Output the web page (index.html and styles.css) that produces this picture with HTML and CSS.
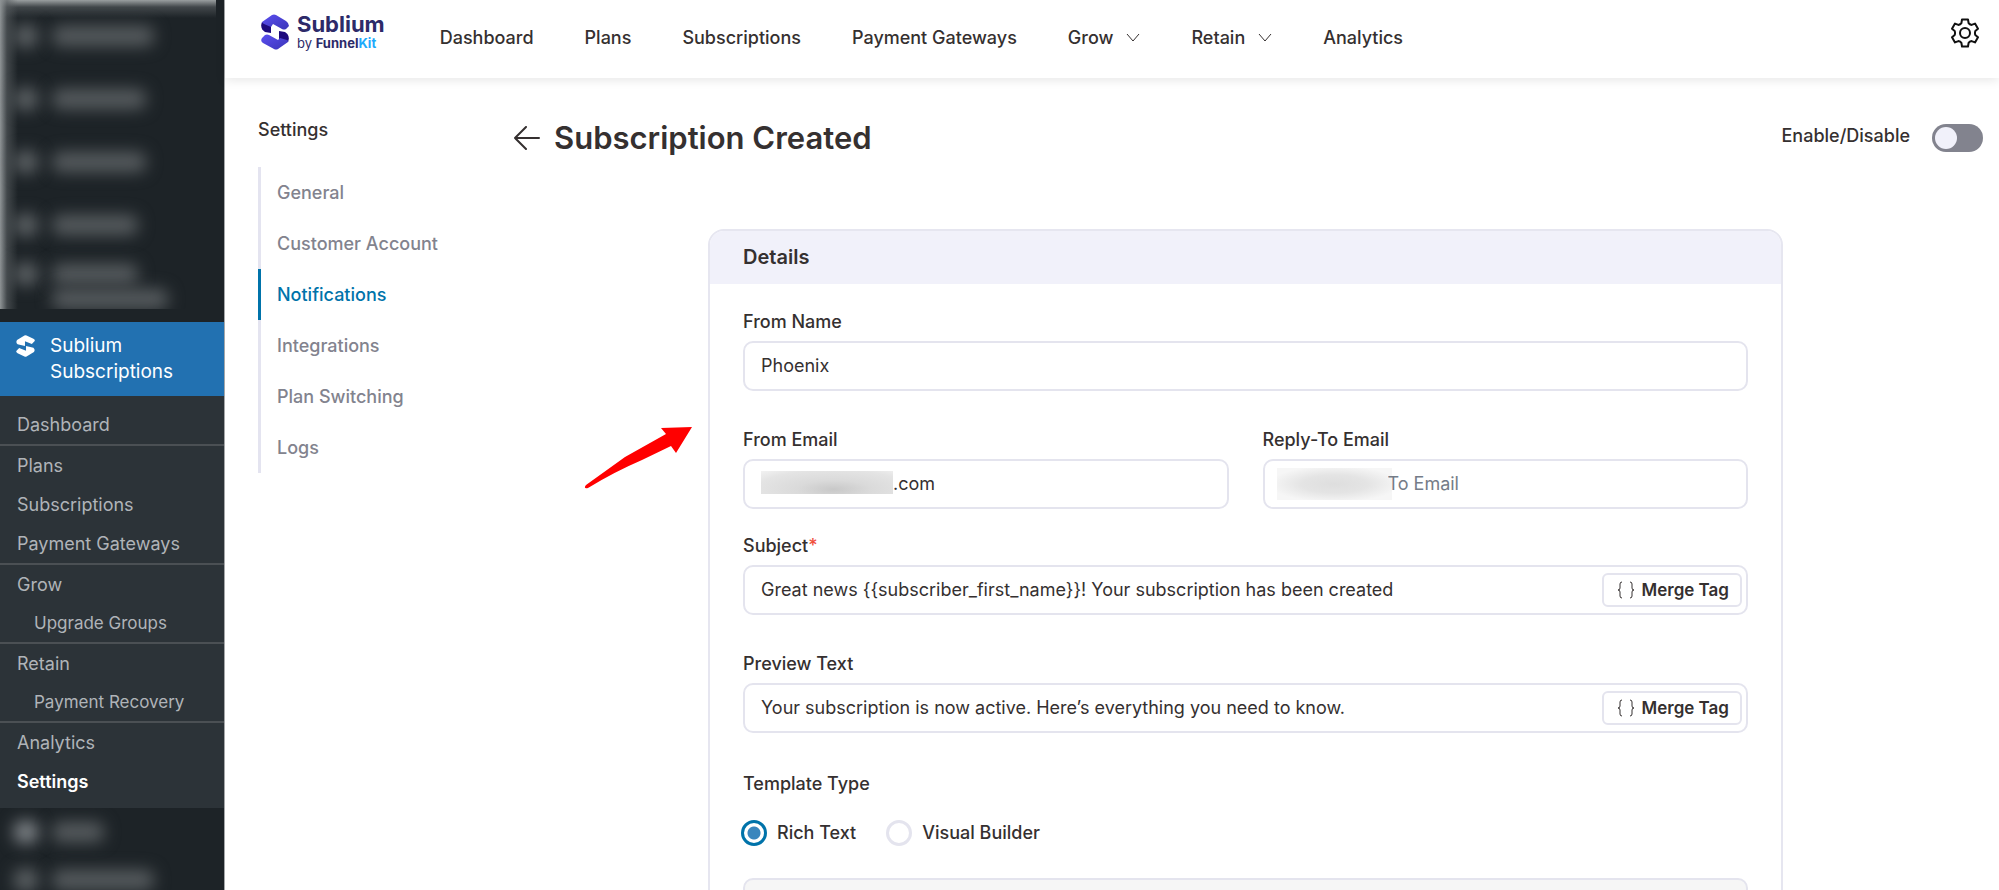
FILE: index.html
```html
<!DOCTYPE html>
<html lang="en">
<head>
    <meta charset="UTF-8">
    <meta name="viewport" content="width=device-width, initial-scale=1.0">
    <title>Subscription Created - Sublium Subscriptions</title>
    <link rel="stylesheet" href="styles.css">
</head>
<body>

    <!-- WordPress admin menu -->
    <aside class="admin-menu">
        <div class="blurred blurred-top" aria-hidden="true">
            <div class="blur-row"><i class="blur-icon"></i><i class="blur-text"></i></div>
            <div class="blur-row"><i class="blur-icon"></i><i class="blur-text medium"></i></div>
            <div class="blur-row"><i class="blur-icon"></i><i class="blur-text medium"></i></div>
            <div class="blur-row"><i class="blur-icon"></i><i class="blur-text small"></i></div>
            <div class="blur-row double"><i class="blur-icon"></i><i class="blur-text small"></i><i class="blur-text second"></i></div>
        </div>

        <a class="menu-current" href="#">
            <svg class="menu-icon" viewBox="0 0 36 52" preserveAspectRatio="none" aria-hidden="true">
                <path fill="#fff" d="M2 12 16 1q2-1 4 0l13 8q4 3 2 6l-5 6-13-6v11L3 22q-4-5-1-10z"/>
                <path fill="#fff" d="M34 40 20 51q-2 1-4 0L3 43q-4-3-2-6l5-6 13 6V26l14 4q4 5 1 10z"/>
            </svg>
            <span>Sublium Subscriptions</span>
        </a>

        <ul class="submenu">
            <li class="divided"><a href="#">Dashboard</a></li>
            <li><a href="#">Plans</a></li>
            <li><a href="#">Subscriptions</a></li>
            <li class="divided"><a href="#">Payment Gateways</a></li>
            <li><a href="#">Grow</a></li>
            <li class="child divided"><a href="#">Upgrade Groups</a></li>
            <li><a href="#">Retain</a></li>
            <li class="child divided"><a href="#">Payment Recovery</a></li>
            <li><a href="#">Analytics</a></li>
            <li class="active"><a href="#">Settings</a></li>
        </ul>

        <div class="blurred blurred-bottom" aria-hidden="true">
            <div class="blur-row"><i class="blur-icon bright"></i><i class="blur-text short"></i></div>
            <div class="blur-row"><i class="blur-icon"></i><i class="blur-text"></i></div>
        </div>
    </aside>

    <div class="page">
        <header class="topbar">
            <a class="logo" href="#">
                <svg class="logo-mark" viewBox="0 0 28 36" aria-hidden="true">
                    <defs>
                        <linearGradient id="light" x1="0" y1="0" x2="1" y2="1">
                            <stop offset="0" stop-color="#5b4ff0"/>
                            <stop offset="1" stop-color="#3b35b8"/>
                        </linearGradient>
                    </defs>
                    <path fill="#1d0a7d" d="M1 8c-2 5 0 8 3 10l6 1V11z"/>
                    <path fill="url(#light)" d="M1 8 11 1q2-1 4 0l10 6q3 2 3 5l-3 3q-2 1-4 0l-9-5-2 3-7-3q-2-1-2-2z"/>
                    <path fill="#1d0a7d" d="M27 28c2-5 0-8-3-10l-6-1v9z"/>
                    <path fill="url(#light)" d="M27 28 17 35q-2 1-4 0L2 29q-3-2-1-5l3-3q2-1 4 0l9 5 2-2 7 2q2 1 1 2z"/>
                </svg>
                <span class="logo-words">
                    <span class="logo-name">Sublium</span>
                    <span class="logo-by">by <b>Funnel</b><b class="kit">Kit</b></span>
                </span>
            </a>
            <nav class="main-nav">
                <a href="#">Dashboard</a>
                <a href="#">Plans</a>
                <a href="#">Subscriptions</a>
                <a href="#">Payment Gateways</a>
                <a href="#">Grow
                    <svg class="chevron" viewBox="0 0 14 9" aria-hidden="true"><path d="M1 1l6 7 6-7"/></svg>
                </a>
                <a href="#">Retain
                    <svg class="chevron" viewBox="0 0 14 9" aria-hidden="true"><path d="M1 1l6 7 6-7"/></svg>
                </a>
                <a href="#">Analytics</a>
            </nav>
            <button class="gear" type="button" aria-label="Settings">
                <svg viewBox="0 0 28 30" aria-hidden="true">
                    <path d="M11 1.500h6l.6 3.700q1 1.400 3 1.700l3.400-1.300 3 5.200-2.700 2.200q-.7 2 0 4l2.700 2.200-3 5.200-3.400-1.300q-2 .3-3 1.700l-.6 3.700h-6l-.6-3.700q-1-1.400-3-1.700l-3.400 1.300-3-5.200 2.700-2.200q.7-2 0-4l-2.700-2.200 3-5.200 3.400 1.300q2-.3 3-1.700z"/>
                    <circle cx="14" cy="15" r="5"/>
                </svg>
            </button>
        </header>

        <div class="content">
            <aside class="settings-nav">
                <h2>Settings</h2>
                <ul>
                    <li><a href="#">General</a></li>
                    <li><a href="#">Customer Account</a></li>
                    <li class="active"><a href="#">Notifications</a></li>
                    <li><a href="#">Integrations</a></li>
                    <li><a href="#">Plan Switching</a></li>
                    <li><a href="#">Logs</a></li>
                </ul>
            </aside>

            <main class="editor">
                <div class="editor-head">
                    <a class="back" href="#" aria-label="Back">
                        <svg viewBox="0 0 26 24" aria-hidden="true"><path d="M25 12H1M12 1 1 12l11 11"/></svg>
                    </a>
                    <h1>Subscription Created</h1>
                    <label class="enable" for="enabled">Enable/Disable</label>
                    <input class="toggle" type="checkbox" role="switch" id="enabled">
                </div>

                <form class="card">
                    <h2 class="card-title">Details</h2>
                    <div class="card-body">
                        <div class="field">
                            <label for="fromName">From Name</label>
                            <div class="box"><input type="text" id="fromName" value="Phoenix"></div>
                        </div>

                        <div class="field-row">
                            <div class="field">
                                <label for="fromEmail">From Email</label>
                                <div class="box">
                                    <i class="redacted"></i>
                                    <input type="text" id="fromEmail" value=".com">
                                </div>
                            </div>
                            <div class="field">
                                <label for="replyTo">Reply-To Email</label>
                                <div class="box">
                                    <i class="redacted tall"></i>
                                    <input type="text" id="replyTo" placeholder="To Email">
                                </div>
                            </div>
                        </div>

                        <div class="field">
                            <label for="subject">Subject<span class="required">*</span></label>
                            <div class="box">
                                <input type="text" id="subject" value="Great news {{subscriber_first_name}}! Your subscription has been created">
                                <button class="merge-tag" type="button">
                                    <svg viewBox="0 0 18 18" aria-hidden="true"><path d="M5 1Q3 1 3 3v4q0 2-2 2 2 0 2 2v4q0 2 2 2M13 1q2 0 2 2v4q0 2 2 2-2 0-2 2v4q0 2-2 2"/></svg>
                                    Merge Tag
                                </button>
                            </div>
                        </div>

                        <div class="field">
                            <label for="preview">Preview Text</label>
                            <div class="box">
                                <input type="text" id="preview" value="Your subscription is now active. Here’s everything you need to know.">
                                <button class="merge-tag" type="button">
                                    <svg viewBox="0 0 18 18" aria-hidden="true"><path d="M5 1Q3 1 3 3v4q0 2-2 2 2 0 2 2v4q0 2 2 2M13 1q2 0 2 2v4q0 2 2 2-2 0-2 2v4q0 2-2 2"/></svg>
                                    Merge Tag
                                </button>
                            </div>
                        </div>

                        <fieldset class="template-type">
                            <legend>Template Type</legend>
                            <div class="radios">
                                <label><input type="radio" name="template" checked>Rich Text</label>
                                <label><input type="radio" name="template">Visual Builder</label>
                            </div>
                        </fieldset>

                        <div class="rich-editor"></div>
                    </div>
                </form>

                <!-- Pointer to the details form -->
                <svg class="pointer" viewBox="0 0 110 64" aria-hidden="true">
                    <path fill="#f00" d="M108 1 77 2l5 6-41 23L2 59q-3 4 2 3Q30 46 58 34l29-14 5 7z"/>
                </svg>
            </main>
        </div>
    </div>

</body>
</html>
```

FILE: styles.css
```css
* {
    box-sizing: border-box;
}
body {
    font-family: Inter, "Liberation Sans", sans-serif;
    font-size: 18px;
    line-height: 22px;
    margin: 0;
    color: #353030;
    background: #fff;
    display: flex;
    height: 100vh;
    overflow: hidden;
}
a {
    color: inherit;
    text-decoration: none;
}
ul {
    list-style: none;
    margin: 0;
    padding: 0;
}
h1, h2 {
    margin: 0;
    font-weight: 500;
}
button, input {
    font: inherit;
    color: inherit;
}
svg {
    flex: none;
}

/* Admin menu */
.admin-menu {
    width: 225px;
    flex: none;
    background: #1d2327;
    border-right: 1px solid #a5a7a9;
    color: #f0f0f1;
    overflow: hidden;
}
.blurred {
    overflow: hidden;
}
.blurred-top {
    height: 309px;
    margin: 0 8px 13px 0;
    padding-top: 24px;
    background:
        linear-gradient(to right, #8f9496, rgba(90, 95, 98, 0.6) 7px, transparent 18px),
        linear-gradient(#9a9fa0, rgba(90, 95, 98, 0.6) 7px, transparent 18px);
}
.blurred-bottom {
    padding: 12px 4px;
}
.blur-row {
    display: grid;
    grid-template-columns: 24px 1fr;
    column-gap: 14px;
    align-items: center;
    height: 24px;
    margin: 0 0 39px 14px;
}
.blur-row.double {
    height: 50px;
    margin-top: -15px;
}
.blurred-bottom .blur-row {
    margin: 0 0 24px 10px;
}
.blur-icon {
    width: 24px;
    height: 22px;
    border-radius: 8px;
    background: #5d6265;
    filter: blur(8px);
}
.blur-icon.bright {
    background: #81868a;
}
.blur-text {
    width: 102px;
    height: 20px;
    border-radius: 8px;
    background: #575c5f;
    filter: blur(8px);
}
.blur-text.medium {
    width: 94px;
}
.blur-text.small {
    width: 86px;
}
.blur-text.short {
    width: 52px;
}
.blur-text.second {
    grid-column: 2;
    width: 116px;
}
.menu-current {
    display: flex;
    gap: 15px;
    padding: 11px 16px;
    background: #2271b1;
    color: #fff;
    font-size: 19px;
    line-height: 26px;
}
.menu-icon {
    width: 19px;
    height: 22px;
    margin-top: 2px;
}
.submenu {
    background: #2c3338;
    color: #b0b4b8;
    padding: 9px 0 7px;
}
.submenu a {
    display: block;
    padding: 0 17px;
    line-height: 39px;
}
.submenu .divided {
    border-bottom: 2px solid #4b5054;
}
.submenu .child a {
    font-size: 17px;
    line-height: 38px;
    padding-left: 34px;
}
.submenu .active {
    color: #fff;
    font-weight: 600;
}

/* Top bar */
.page {
    flex: 1;
    min-width: 0;
}
.topbar {
    display: flex;
    align-items: center;
    height: 78px;
    padding: 0 20px 3px 36px;
    box-shadow: 0 2px 10px rgba(0, 0, 0, 0.1);
}
.logo {
    display: flex;
    gap: 8px;
    margin-bottom: 9px;
    color: #2d2a69;
}
.logo-mark {
    width: 28px;
    height: 36px;
}
.logo-words {
    display: flex;
    flex-direction: column;
}
.logo-name {
    font-size: 22px;
    font-weight: 700;
    line-height: 20px;
}
.logo-by {
    font-size: 13px;
    line-height: 18px;
}
.logo-by .kit {
    color: #1daafc;
}
.main-nav {
    display: flex;
    gap: 51px;
    margin-left: 55px;
    font-weight: 500;
}
.main-nav a {
    display: flex;
    align-items: center;
    gap: 13px;
}
.chevron {
    width: 14px;
    height: 9px;
    fill: none;
    stroke: #353030;
}
.gear {
    margin-left: auto;
    margin-bottom: 9px;
    padding: 0;
    border: 0;
    background: none;
    cursor: pointer;
    line-height: 0;
}
.gear svg {
    width: 28px;
    height: 30px;
    fill: none;
    stroke: #111;
    stroke-width: 2;
    stroke-linejoin: round;
}

/* Settings side navigation */
.content {
    display: flex;
    padding: 40px 16px 0 33px;
}
.settings-nav {
    width: 256px;
    flex: none;
}
.settings-nav h2 {
    font-size: 18px;
    line-height: 24px;
    margin-bottom: 25px;
}
.settings-nav ul {
    border-left: 3px solid #e4e4f0;
}
.settings-nav li {
    margin-left: -3px;
    padding-left: 16px;
    border-left: 3px solid transparent;
    line-height: 51px;
    font-weight: 500;
    color: #82838e;
}
.settings-nav .active {
    border-color: #0073aa;
    color: #0073aa;
}

/* Editor */
.editor {
    flex: 1;
    min-width: 0;
    position: relative;
}
.editor-head {
    display: flex;
    align-items: center;
    height: 40px;
}
.back {
    display: flex;
}
.back svg {
    width: 26px;
    height: 24px;
    fill: none;
    stroke: #353030;
    stroke-width: 2;
    stroke-linecap: round;
    stroke-linejoin: round;
}
h1 {
    font-size: 31px;
    line-height: 40px;
    margin-left: 14px;
    font-weight: 600;
}
.enable {
    margin-left: auto;
    margin-right: 22px;
    padding-bottom: 4px;
    font-weight: 500;
}
.toggle {
    appearance: none;
    width: 51px;
    height: 28px;
    margin: 0;
    padding: 3px;
    border-radius: 14px;
    background: #82838e;
    cursor: pointer;
}
.toggle::before {
    content: "";
    display: block;
    width: 22px;
    height: 22px;
    border-radius: 50%;
    background: #f1f1fa;
}
.toggle:checked {
    background: #0073aa;
}
.toggle:checked::before {
    margin-left: auto;
}
.card {
    margin: 71px 200px 0 194px;
    border: 2px solid #e6e6f0;
    border-radius: 16px;
    overflow: hidden;
}
.card-title {
    background: #f1f1fa;
    padding: 14px 33px 15px;
    font-size: 20px;
    line-height: 24px;
    font-weight: 600;
}
.card-body {
    padding: 27px 33px 32px;
}
.field {
    display: flex;
    flex-direction: column;
    gap: 8px;
    margin-bottom: 38px;
    font-weight: 500;
}
.field-row {
    display: grid;
    grid-template-columns: 1fr 1fr;
    gap: 34px;
    margin-bottom: 26px;
}
.field-row .field {
    margin-bottom: 0;
}
.required {
    color: #f0503c;
}
.box {
    display: flex;
    align-items: center;
    height: 50px;
    padding: 0 4px 0 16px;
    border: 2px solid #e4e4ee;
    border-radius: 10px;
    font-weight: 400;
}
.box input {
    flex: 1;
    min-width: 0;
    padding: 0;
    border: 0;
    outline: 0;
    background: none;
}
.box input::placeholder {
    color: #757c88;
    opacity: 1;
}
.redacted {
    width: 132px;
    height: 23px;
    margin-bottom: 4px;
    background: radial-gradient(ellipse at 55% 80%, #c8c8c8, #dadada 35%, #e4e4e4 75%, #f2f2f2);
}
.redacted.tall {
    width: 115px;
    height: 32px;
    margin: 0 -4px 0 -4px;
    background: radial-gradient(ellipse at 50% 50%, #dedede, #e4e4e4 40%, #f6f6f6 80%);
}
.merge-tag {
    display: flex;
    align-items: center;
    gap: 7px;
    height: 34px;
    padding: 0 11px 0 13px;
    border: 2px solid #e4e4ee;
    border-radius: 6px;
    background: #fff;
    font-size: 17px;
    font-weight: 600;
    cursor: pointer;
}
.merge-tag svg {
    width: 18px;
    height: 18px;
    fill: none;
    stroke: #353030;
}
.template-type {
    margin: 40px 0 32px;
    padding: 0;
    border: 0;
    font-weight: 500;
}
.template-type legend {
    padding: 0;
}
.radios {
    display: flex;
    gap: 32px;
    padding-top: 25px;
}
.radios label {
    display: flex;
    align-items: center;
    gap: 10px;
}
.radios input {
    appearance: none;
    width: 26px;
    height: 26px;
    margin: 0 0 0 -2px;
    border: 3px solid #e4e4ee;
    border-radius: 50%;
}
.radios input:checked {
    border-color: #0073aa;
    background: radial-gradient(circle, #3a86bd 6px, transparent 7px);
}
.rich-editor {
    height: 240px;
    border: 2px solid #e4e4ee;
    border-radius: 10px;
    background: #f6f6f6;
}

/* Red arrow that lies over the page, left of the card */
.pointer {
    position: absolute;
    top: 308px;
    left: 70px;
    width: 110px;
    height: 64px;
}
```
